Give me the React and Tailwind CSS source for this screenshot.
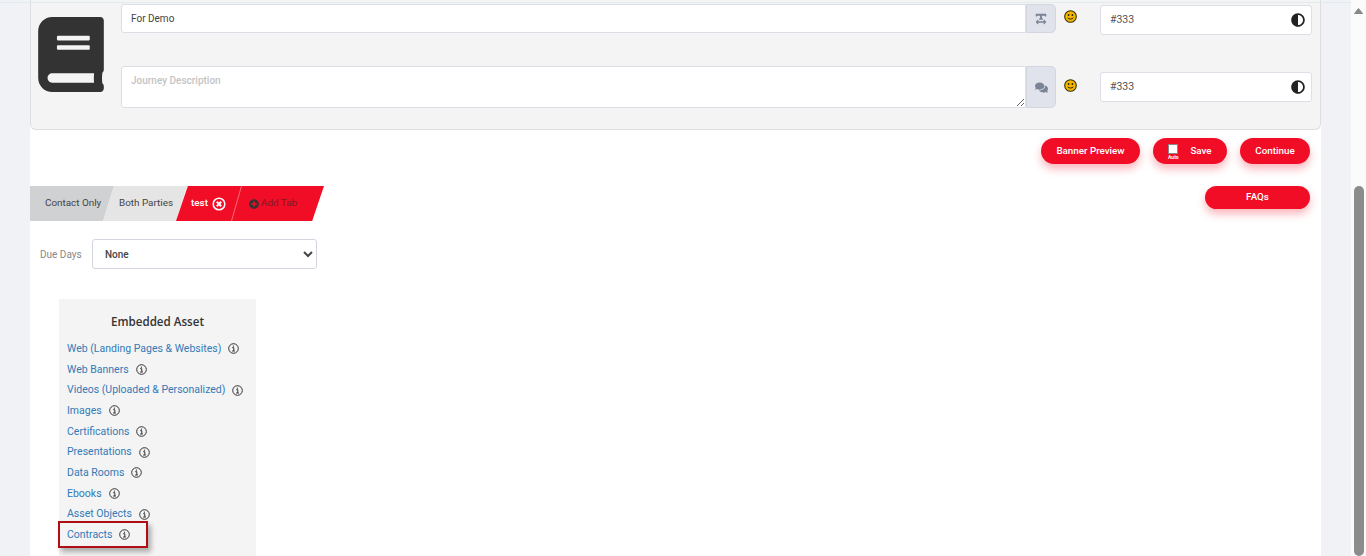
import React from 'react';
import { FaBook, FaTextWidth, FaComments, FaAdjust, FaPlusCircle } from 'react-icons/fa';

const ASSETS = [
    'Web (Landing Pages & Websites)',
    'Web Banners',
    'Videos (Uploaded & Personalized)',
    'Images',
    'Certifications',
    'Presentations',
    'Data Rooms',
    'Ebooks',
    'Asset Objects',
];

const InfoIcon = () => (
    <svg className="w-[11px] h-[11px] shrink-0 text-[#333]" viewBox="0 0 11 11" fill="none" stroke="currentColor">
        <circle cx="5.5" cy="5.5" r="4.8" strokeWidth="1" />
        <path d="M4.2 4.7h1.6v3.2M4.1 8h2.8M5.4 2.6v1.2" strokeWidth="1" />
    </svg>
);

const Smiley = () => (
    <svg className="w-[13px] h-[13px] ml-[8px]" viewBox="0 0 13 13">
        <circle cx="6.5" cy="6.5" r="5.8" fill="#f5b800" stroke="#3a3000" strokeWidth="1.1" />
        <circle cx="4.6" cy="5" r="0.9" fill="#222" />
        <circle cx="8.4" cy="5" r="0.9" fill="#222" />
        <path d="M3.6 7.8c1.4 1.7 4.4 1.7 5.8 0" fill="none" stroke="#222" strokeWidth="1" />
    </svg>
);

const ColorInput = () => (
    <div className="w-[212px] h-[30px] bg-white border border-[#dcdfe6] rounded-[3px] flex items-center justify-between pl-[9px] pr-[6px] text-[10.5px] text-[#555]">
        <span>#333</span>
        <FaAdjust className="w-[14px] h-[14px] text-[#222]" />
    </div>
);

const Addon = ({ children }) => (
    <div className="w-[30px] h-full bg-[#e0e3eb] border border-[#d3d6de] rounded-r-[5px] flex items-center justify-center text-[#7b8494]">
        {children}
    </div>
);

const RedButton = ({ className, children }) => (
    <button className={`rounded-full bg-[#f20d26] text-white text-[9.8px] font-medium shadow-[0_5px_9px_rgba(242,13,38,0.3)] flex items-center justify-center ${className}`}>
        {children}
    </button>
);

export default function App() {
    return (
        <div className="relative h-[556px] overflow-hidden flex bg-white text-[#333] font-['Roboto',sans-serif]">
            <div className="absolute left-0 top-[2px] w-[1351px] h-[1px] bg-[#dfebf0]" />
            <div className="w-[30px] bg-[#f0f2f6]" />
            <main className="w-[1291px] bg-white">
                {/* Journey header panel */}
                <div className="h-[130px] bg-[#f4f4f4] border border-[#dedede] border-t-0 rounded-b-[6px] flex pl-[7px]">
                    <FaBook className="w-[66px] h-[75px] mt-[17px] text-[#333] shrink-0" />
                    <div className="ml-[17px] flex-1 flex flex-col">
                        <div className="flex mt-[4px] h-[29px]">
                            <input
                                defaultValue="For Demo"
                                className="w-[905px] h-full bg-white border border-[#dcdfe6] rounded-l-[3px] px-[9px] text-[10px] text-[#444] outline-none"
                            />
                            <Addon><FaTextWidth className="w-[12px] h-[12px]" /></Addon>
                            <div className="w-[44px] pt-[6px]"><Smiley /></div>
                            <div className="mt-[1px]"><ColorInput /></div>
                        </div>
                        <div className="flex mt-[33px] h-[42px]">
                            <textarea
                                placeholder="Journey Description"
                                className="w-[905px] h-full bg-white border border-[#dcdfe6] rounded-l-[3px] px-[9px] py-[6px] text-[10px] font-medium outline-none placeholder:text-[#c4c4c4]"
                            />
                            <Addon><FaComments className="w-[13px] h-[13px]" /></Addon>
                            <div className="w-[44px] pt-[13px]"><Smiley /></div>
                            <div className="mt-[6px]"><ColorInput /></div>
                        </div>
                    </div>
                </div>

                {/* Actions */}
                <div className="flex justify-end gap-[13px] pr-[11px] mt-[8px]">
                    <RedButton className="w-[99px] h-[26px]">Banner Preview</RedButton>
                    <RedButton className="w-[74px] h-[26px] relative">
                        <span className="absolute left-[15px] top-[6px] flex flex-col items-center">
                            <span className="w-[10px] h-[10px] bg-white border border-[#888]" />
                            <span className="text-[5px] leading-[6px] font-bold">Auto</span>
                        </span>
                        <span className="ml-[22px]">Save</span>
                    </RedButton>
                    <RedButton className="w-[70px] h-[26px]">Continue</RedButton>
                </div>

                {/* Tabs */}
                <div className="flex justify-between mt-[22px] h-[35px]">
                    <div className="flex text-[9.9px]">
                        <div className="w-[84px] bg-[#d0d1d3] pl-[15px] flex items-center text-[#444] [clip-path:polygon(0_0,100%_0,87%_100%,0_100%)]">
                            Contact Only
                        </div>
                        <div className="-ml-[11px] w-[84px] bg-[#e5e5e5] pl-[16px] flex items-center text-[#444] [clip-path:polygon(13%_0,100%_0,87%_100%,0_100%)]">
                            Both Parties
                        </div>
                        <div className="-ml-[11px] w-[148px] bg-[#f20d26] flex items-center [clip-path:polygon(8%_0,100%_0,92%_100%,0_100%)]">
                            <span className="ml-[15px] text-white font-medium">test</span>
                            <svg className="ml-[4px] w-[14px] h-[14px]" viewBox="0 0 14 14" fill="none" stroke="white">
                                <circle cx="7" cy="7" r="5.8" strokeWidth="1.6" />
                                <path d="M4.8 4.8l4.4 4.4M9.2 4.8l-4.4 4.4" strokeWidth="2" />
                            </svg>
                            <span className="ml-[10px] w-px h-full bg-[#ff6a78] skew-x-[-16deg]" />
                            <FaPlusCircle className="ml-[12px] w-[10px] h-[10px] text-[#333]" />
                            <span className="ml-[2px] text-[#7c1a24]">Add Tab</span>
                        </div>
                    </div>
                    <RedButton className="w-[105px] mr-[11px] h-[23px]">FAQs</RedButton>
                </div>

                {/* Due days */}
                <div className="flex items-center mt-[18px] ml-[10px]">
                    <label className="text-[10px] text-[#888] w-[52px]">Due Days</label>
                    <select className="w-[225px] h-[30px] bg-white border border-[#d3d6de] rounded-[3px] pl-[8px] text-[10px] font-medium text-[#444] outline-none">
                        <option>None</option>
                    </select>
                </div>

                {/* Embedded assets */}
                <div className="w-[197px] h-[300px] ml-[29px] mt-[30px] bg-[#f4f4f4] pl-[8px]">
                    <h3 className="pt-[14px] h-[39.5px] text-center text-[11.6px] font-semibold text-[#333] pr-[8px] font-['Open_Sans',sans-serif]">Embedded Asset</h3>
                    <ul className="text-[10.5px] text-[#337ab7]">
                        {ASSETS.map((name) => (
                            <li key={name} className="h-[20.67px] flex items-center gap-[7px]">
                                <span>{name}</span>
                                <InfoIcon />
                            </li>
                        ))}
                        <li className="relative h-[20.67px] flex items-center gap-[7px]">
                            <span>Contracts</span>
                            <InfoIcon />
                            <div className="absolute -left-[9px] -top-[3px] w-[90px] h-[27px] border-2 border-[#b00d14] shadow-[3px_4px_5px_rgba(0,0,0,0.3)]" />
                        </li>
                    </ul>
                </div>
            </main>
            <div className="w-[30px] bg-[#f0f2f6]" />
            <div className="w-[15px] bg-[#fbfbfb] relative">
                <svg className="absolute left-[3px] top-[8px] w-[9px] h-[6px]" viewBox="0 0 9 6">
                    <path d="M4.5 0.5L8.5 5.5H0.5Z" fill="#888" stroke="#888" strokeLinejoin="round" />
                </svg>
                <div className="absolute left-[3px] top-[186px] w-[10px] h-[370px] rounded-full bg-[#8c8c8c]" />
            </div>
        </div>
    );
}
